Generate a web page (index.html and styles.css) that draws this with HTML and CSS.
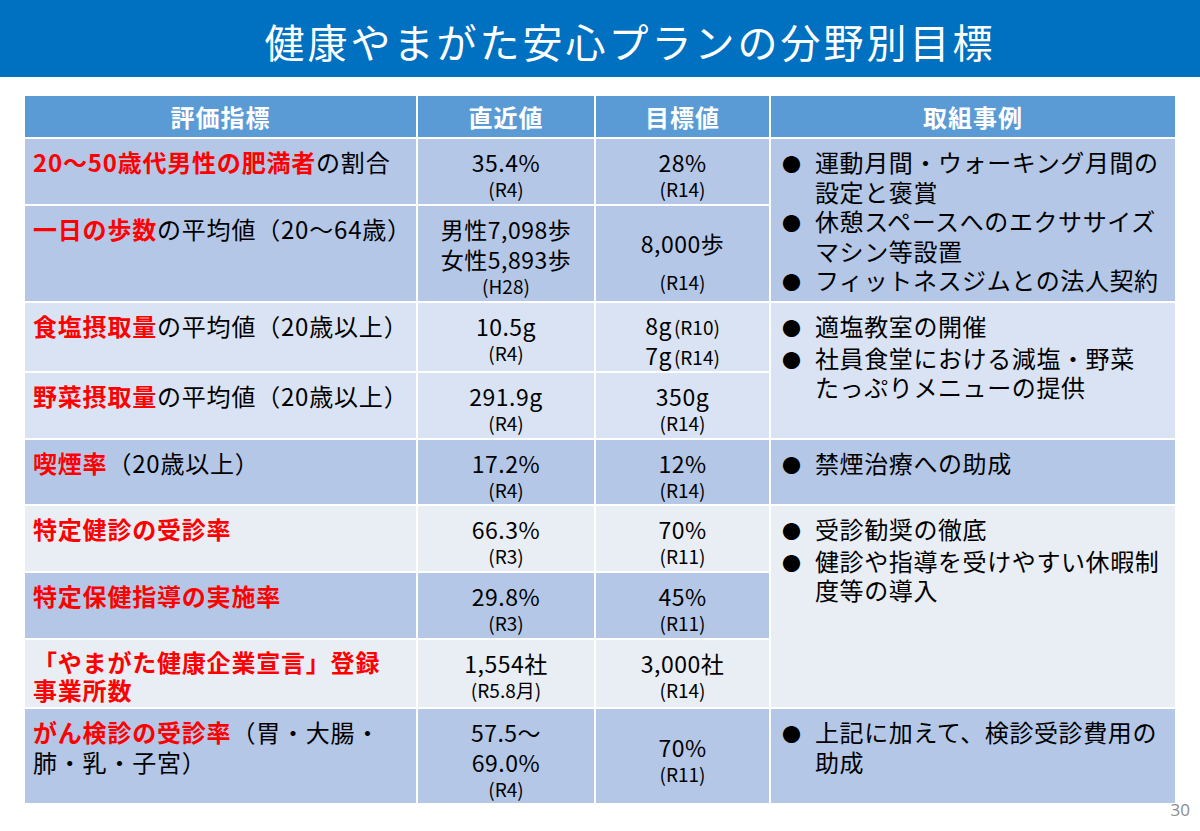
FILE: index.html
```html
<!DOCTYPE html>
<html lang="ja">
<head>
<meta charset="utf-8">
<title>健康やまがた安心プランの分野別目標</title>
<link rel="stylesheet" href="styles.css">
</head>
<body>
<header class="titlebar"><h1>健康やまがた安心プランの分野別目標</h1></header>
<table class="goals">
  <colgroup><col class="c1"><col class="c2"><col class="c3"><col class="c4"></colgroup>
  <thead>
    <tr class="r-head"><th>評価指標</th><th>直近値</th><th>目標値</th><th>取組事例</th></tr>
  </thead>
  <tbody>
    <tr class="r1">
      <td class="ind dark"><span class="em">20〜50歳代男性の肥満者</span>の割合</td>
      <td class="val dark">35.4%<span class="sub">(R4)</span></td>
      <td class="val dark">28%<span class="sub">(R14)</span></td>
      <td class="act dark" rowspan="2">
        <div class="item"><span class="dot">●</span><span>運動月間・ウォーキング月間の<br>設定と褒賞</span></div>
        <div class="item"><span class="dot">●</span><span>休憩スペースへのエクササイズ<br>マシン等設置</span></div>
        <div class="item"><span class="dot">●</span><span>フィットネスジムとの法人契約</span></div>
      </td>
    </tr>
    <tr class="r2">
      <td class="ind dark"><span class="em">一日の歩数</span>の平均値（20〜64歳）</td>
      <td class="val dark">男性7,098歩<br>女性5,893歩<span class="sub">(H28)</span></td>
      <td class="val dark mid2">8,000歩<span class="sub gap">(R14)</span></td>
    </tr>
    <tr class="r3">
      <td class="ind light"><span class="em">食塩摂取量</span>の平均値（20歳以上）</td>
      <td class="val light">10.5g<span class="sub">(R4)</span></td>
      <td class="val light pair">8g<span class="inl">(R10)</span><br>7g<span class="inl">(R14)</span></td>
      <td class="act light" rowspan="2">
        <div class="item"><span class="dot">●</span><span>適塩教室の開催</span></div>
        <div class="item"><span class="dot">●</span><span>社員食堂における減塩・野菜<br>たっぷりメニューの提供</span></div>
      </td>
    </tr>
    <tr class="r4">
      <td class="ind light"><span class="em">野菜摂取量</span>の平均値（20歳以上）</td>
      <td class="val light">291.9g<span class="sub">(R4)</span></td>
      <td class="val light">350g<span class="sub">(R14)</span></td>
    </tr>
    <tr class="r5">
      <td class="ind dark"><span class="em">喫煙率</span>（20歳以上）</td>
      <td class="val dark">17.2%<span class="sub">(R4)</span></td>
      <td class="val dark">12%<span class="sub">(R14)</span></td>
      <td class="act dark">
        <div class="item"><span class="dot">●</span><span>禁煙治療への助成</span></div>
      </td>
    </tr>
    <tr class="r6">
      <td class="ind pale"><span class="em">特定健診の受診率</span></td>
      <td class="val pale">66.3%<span class="sub">(R3)</span></td>
      <td class="val pale">70%<span class="sub">(R11)</span></td>
      <td class="act pale" rowspan="3">
        <div class="item"><span class="dot">●</span><span>受診勧奨の徹底</span></div>
        <div class="item"><span class="dot">●</span><span>健診や指導を受けやすい休暇制<br>度等の導入</span></div>
      </td>
    </tr>
    <tr class="r7">
      <td class="ind dark"><span class="em">特定保健指導の実施率</span></td>
      <td class="val dark">29.8%<span class="sub">(R3)</span></td>
      <td class="val dark">45%<span class="sub">(R11)</span></td>
    </tr>
    <tr class="r8">
      <td class="ind pale tight"><span class="em">「やまがた健康企業宣言」登録<br>事業所数</span></td>
      <td class="val pale">1,554社<span class="sub">(R5.8月)</span></td>
      <td class="val pale">3,000社<span class="sub">(R14)</span></td>
    </tr>
    <tr class="r9">
      <td class="ind dark"><span class="em">がん検診の受診率</span>（胃・大腸・<br>肺・乳・子宮）</td>
      <td class="val dark">57.5〜<br>69.0%<span class="sub">(R4)</span></td>
      <td class="val dark mid9">70%<span class="sub">(R11)</span></td>
      <td class="act dark">
        <div class="item"><span class="dot">●</span><span>上記に加えて、検診受診費用の<br>助成</span></div>
      </td>
    </tr>
  </tbody>
</table>
<div class="pageno">30</div>
</body>
</html>
```

FILE: styles.css
```css
html, body {
  margin: 0;
  padding: 0;
  background: #ffffff;
}

body {
  width: 1200px;
  height: 831px;
  overflow: hidden;
  font-family: "Liberation Sans Narrow", "Noto Sans CJK JP", "Noto Sans", sans-serif;
  color: #000000;
}

.titlebar {
  height: 77px;
  background: #0070c0;
  display: flex;
  align-items: center;
  justify-content: center;
  padding: 4px 0 0 60px;
  box-sizing: border-box;
}

.titlebar h1 {
  margin: 0;
  font-family: "Noto Sans CJK JP", sans-serif;
  font-size: 40px;
  font-weight: 400;
  line-height: 1;
  letter-spacing: 3px;
  color: #ffffff;
}

.goals {
  margin: 17px 0 0 23px;
  width: 1154px;
  table-layout: fixed;
  border-collapse: separate;
  border-spacing: 2px;
}

.c1 { width: 391px; }
.c2 { width: 176px; }
.c3 { width: 173px; }
.c4 { width: 404px; }

.r-head { height: 41px; }
.r1 { height: 65px; }
.r2 { height: 95px; }
.r3 { height: 67px; }
.r4 { height: 65px; }
.r5 { height: 64px; }
.r6 { height: 65px; }
.r7 { height: 65px; }
.r8 { height: 67px; }
.r9 { height: 94px; }

.goals th {
  background: #5b9bd5;
  color: #ffffff;
  font-family: "Noto Sans CJK JP", sans-serif;
  font-size: 24px;
  font-weight: 700;
  letter-spacing: 1px;
  padding: 0;
  vertical-align: middle;
  text-align: center;
}

.goals td {
  vertical-align: top;
  padding: 8px 0 0 0;
}

.dark { background: #b4c7e7; }
.light { background: #dae3f3; }
.pale { background: #e9edf4; }

.ind {
  padding-left: 8px !important;
  font-size: 24px;
  line-height: 30px;
  letter-spacing: 0.8px;
  white-space: nowrap;
}

.ind.tight { line-height: 28px; }

.em {
  color: #ff0000;
  font-weight: 700;
}

.val {
  text-align: center;
  font-size: 23px;
  line-height: 30px;
  letter-spacing: 0.5px;
  white-space: nowrap;
}

.sub {
  display: block;
  font-size: 19px;
  line-height: 24px;
  letter-spacing: 0;
}

.sub.gap { margin-top: 12px; }

.goals td.mid2 { padding-top: 22px; }
.goals td.mid9 { padding-top: 23px; }

.val.pair { line-height: 29px; }

.inl {
  font-size: 19px;
  margin-left: 2px;
  letter-spacing: 0;
}

.act {
  padding-left: 11px !important;
  font-family: "Noto Sans CJK JP", sans-serif;
  font-size: 24px;
  line-height: 29.5px;
  letter-spacing: 0.6px;
  white-space: nowrap;
}

.item {
  display: flex;
  align-items: baseline;
}

.dot {
  flex: none;
  width: 33px;
  font-size: 19px;
  letter-spacing: 0;
}

.pageno {
  margin-top: -4px;
  padding-right: 10px;
  text-align: right;
  font-family: "Open Sans", "Liberation Sans", sans-serif;
  font-size: 17px;
  line-height: 18px;
  color: #8c8c8c;
}
```
